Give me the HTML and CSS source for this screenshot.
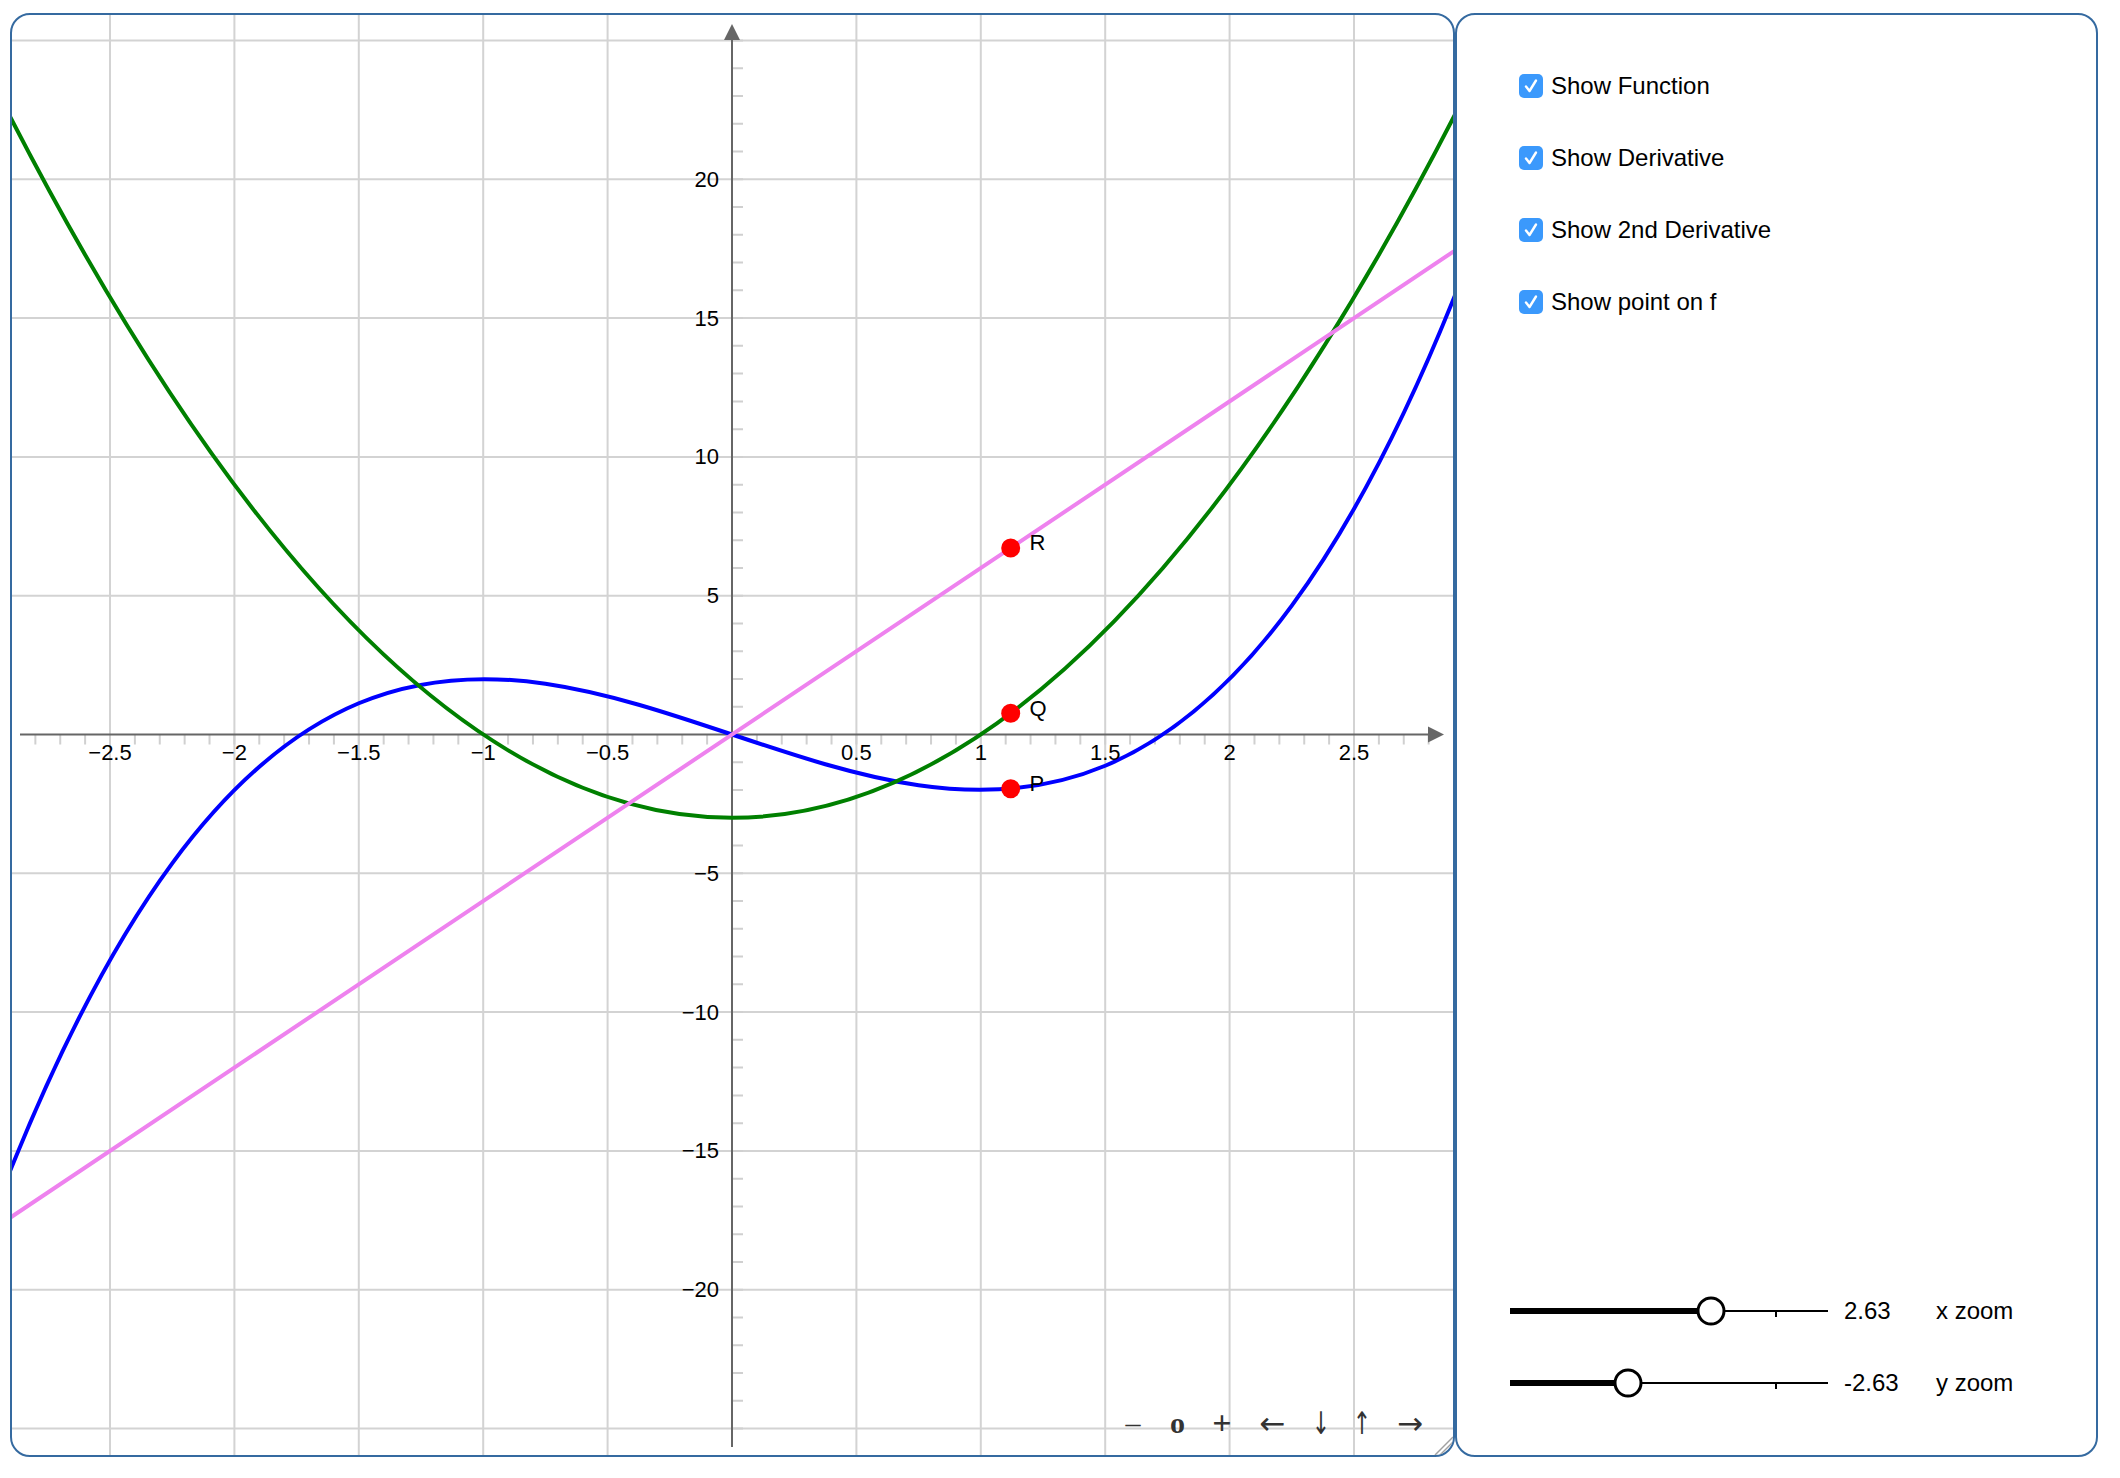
FILE: index.html
```html
<!DOCTYPE html>
<html lang="en">
<head>
<meta charset="utf-8">
<title>Function and derivatives</title>
<link rel="stylesheet" href="styles.css">
</head>
<body>
<div class="page">
  <div class="board">
    <svg class="plot" width="1441" height="1440" viewBox="0 0 1441 1440">
      <g class="grid">
        <line x1="98" y1="0" x2="98" y2="1440"/>
        <line x1="222.4" y1="0" x2="222.4" y2="1440"/>
        <line x1="346.8" y1="0" x2="346.8" y2="1440"/>
        <line x1="471.2" y1="0" x2="471.2" y2="1440"/>
        <line x1="595.6" y1="0" x2="595.6" y2="1440"/>
        <line x1="844.4" y1="0" x2="844.4" y2="1440"/>
        <line x1="968.8" y1="0" x2="968.8" y2="1440"/>
        <line x1="1093.2" y1="0" x2="1093.2" y2="1440"/>
        <line x1="1217.6" y1="0" x2="1217.6" y2="1440"/>
        <line x1="1342" y1="0" x2="1342" y2="1440"/>
        <line x1="0" y1="25.5" x2="1441" y2="25.5"/>
        <line x1="0" y1="164.3" x2="1441" y2="164.3"/>
        <line x1="0" y1="303.1" x2="1441" y2="303.1"/>
        <line x1="0" y1="441.9" x2="1441" y2="441.9"/>
        <line x1="0" y1="580.7" x2="1441" y2="580.7"/>
        <line x1="0" y1="858.3" x2="1441" y2="858.3"/>
        <line x1="0" y1="997.1" x2="1441" y2="997.1"/>
        <line x1="0" y1="1135.9" x2="1441" y2="1135.9"/>
        <line x1="0" y1="1274.7" x2="1441" y2="1274.7"/>
        <line x1="0" y1="1413.5" x2="1441" y2="1413.5"/>
      </g>
      <line class="ticks-x" x1="-27.4" y1="724.5" x2="1420" y2="724.5"/>
      <line class="ticks-y" x1="726" y1="-3.26" x2="726" y2="1432"/>
      <g class="axis">
        <line x1="8" y1="719.5" x2="1418" y2="719.5"/>
        <polygon points="1432,719.5 1416,711.5 1416,727.5"/>
        <line x1="720" y1="1432" x2="720" y2="23"/>
        <polygon points="720,9 712,25 728,25"/>
      </g>
      <path class="curve-f" d="M -26.4 1219.18 C 471.2 -113.3, 968.8 1552.3, 1466.4 219.82"/>
      <path class="curve-d1" d="M -26.4 53.26 C 471.2 1052.62, 968.8 1052.62, 1466.4 53.26"/>
      <path class="curve-d2" d="M -26.4 1219.18 L 1466.4 219.82"/>
      <g class="pt">
        <circle cx="998.7" cy="773.8" r="9.5"/>
        <circle cx="998.7" cy="698.3" r="9.5"/>
        <circle cx="998.7" cy="532.95" r="9.5"/>
      </g>
      <g class="lbl">
        <text x="1017.5" y="535">R</text>
        <text x="1017.5" y="700.5">Q</text>
        <text x="1017.5" y="776">P</text>
      </g>
      <g class="lbl tx">
        <text x="98" y="745">−2.5</text>
        <text x="222.4" y="745">−2</text>
        <text x="346.8" y="745">−1.5</text>
        <text x="471.2" y="745">−1</text>
        <text x="595.6" y="745">−0.5</text>
        <text x="844.4" y="745">0.5</text>
        <text x="968.8" y="745">1</text>
        <text x="1093.2" y="745">1.5</text>
        <text x="1217.6" y="745">2</text>
        <text x="1342" y="745">2.5</text>
      </g>
      <g class="lbl ty">
        <text x="707" y="171.8">20</text>
        <text x="707" y="310.6">15</text>
        <text x="707" y="449.4">10</text>
        <text x="707" y="588.2">5</text>
        <text x="707" y="865.8">−5</text>
        <text x="707" y="1004.6">−10</text>
        <text x="707" y="1143.4">−15</text>
        <text x="707" y="1282.2">−20</text>
      </g>
    </svg>
    <div class="navbar">
      <span class="nav-btn nav-sym">–</span><span class="nav-btn nav-sym nav-bold">o</span><span class="nav-btn nav-sym nav-bold nav-plus">+</span><span class="nav-btn nav-arrow">←</span><span class="nav-btn nav-arrow nav-vert">↓</span><span class="nav-btn nav-arrow nav-vert">↑</span><span class="nav-btn nav-arrow">→</span>
    </div>
    <svg class="grip" width="22" height="22" viewBox="0 0 22 22">
      <line x1="4" y1="22" x2="22" y2="4"/>
      <line x1="9" y1="22" x2="22" y2="9"/>
      <line x1="14" y1="22" x2="22" y2="14"/>
    </svg>
  </div>
  <div class="controls">
    <ul class="checks">
      <li class="check-row"><span class="box"><svg width="24" height="24" viewBox="0 0 24 24"><path d="M7 12.5 L10.5 17 L17 6.5"/></svg></span><span>Show Function</span></li>
      <li class="check-row"><span class="box"><svg width="24" height="24" viewBox="0 0 24 24"><path d="M7 12.5 L10.5 17 L17 6.5"/></svg></span><span>Show Derivative</span></li>
      <li class="check-row"><span class="box"><svg width="24" height="24" viewBox="0 0 24 24"><path d="M7 12.5 L10.5 17 L17 6.5"/></svg></span><span>Show 2nd Derivative</span></li>
      <li class="check-row"><span class="box"><svg width="24" height="24" viewBox="0 0 24 24"><path d="M7 12.5 L10.5 17 L17 6.5"/></svg></span><span>Show point on f</span></li>
    </ul>
    <div class="sliders">
      <div class="slider-row">
        <svg class="slider" width="318" height="40" viewBox="0 0 318 40">
          <line class="track" x1="0" y1="20" x2="318" y2="20"/>
          <line class="fill" x1="0" y1="20" x2="201" y2="20"/>
          <line class="mark" x1="266" y1="20" x2="266" y2="26"/>
          <circle class="knob" cx="201" cy="20" r="13"/>
        </svg>
        <span class="value">2.63</span>
        <span class="name">x zoom</span>
      </div>
      <div class="slider-row">
        <svg class="slider" width="318" height="40" viewBox="0 0 318 40">
          <line class="track" x1="0" y1="20" x2="318" y2="20"/>
          <line class="fill" x1="0" y1="20" x2="118" y2="20"/>
          <line class="mark" x1="266" y1="20" x2="266" y2="26"/>
          <circle class="knob" cx="118" cy="20" r="13"/>
        </svg>
        <span class="value">-2.63</span>
        <span class="name">y zoom</span>
      </div>
    </div>
  </div>
</div>
</body>
</html>
```
FILE: styles.css
```css
html, body {
  margin: 0;
  padding: 0;
  background: #ffffff;
}

.page {
  display: flex;
  align-items: flex-start;
  padding: 13px 0 0 10px;
}

.board {
  position: relative;
  width: 1445px;
  height: 1444px;
  box-sizing: border-box;
  border: 2px solid #356aa0;
  border-radius: 20px;
  overflow: hidden;
  background: #ffffff;
}

.plot {
  display: block;
}

.grid line {
  stroke: #d3d3d3;
  stroke-width: 2;
}

.ticks-x {
  stroke: #d0d0d0;
  stroke-width: 10;
  stroke-dasharray: 2 22.88;
}

.ticks-y {
  stroke: #d0d0d0;
  stroke-width: 10;
  stroke-dasharray: 2 25.76;
}

.axis line {
  stroke: #666666;
  stroke-width: 2;
}

.axis polygon {
  fill: #666666;
}

.curve-f,
.curve-d1,
.curve-d2 {
  fill: none;
  stroke-width: 4;
  stroke-linecap: round;
}

.curve-f { stroke: #0000ff; }
.curve-d1 { stroke: #008000; }
.curve-d2 { stroke: #ee82ee; }

.pt circle {
  fill: #ff0000;
}

.lbl text {
  font-family: "Liberation Sans", Arial, sans-serif;
  font-size: 22px;
  fill: #000000;
}

.tx text { text-anchor: middle; }
.ty text { text-anchor: end; }

.navbar {
  position: absolute;
  right: 30px;
  bottom: 18px;
  height: 28px;
  display: flex;
  align-items: center;
  gap: 30.5px;
  font-family: "Liberation Serif", "DejaVu Serif", serif;
  font-size: 30px;
  color: #333333;
}

.nav-btn {
  display: flex;
  align-items: center;
  justify-content: center;
  height: 28px;
  line-height: 1;
  overflow: visible;
  white-space: nowrap;
}

.nav-sym {
  width: 14px;
}

.nav-bold {
  font-weight: bold;
}

.nav-plus {
  font-size: 34px;
}

.nav-arrow {
  font-family: "DejaVu Sans", sans-serif;
  font-size: 31px;
  width: 26px;
}

.nav-vert {
  width: 10px;
  transform: scaleX(0.7);
}

.grip {
  position: absolute;
  right: 0;
  bottom: 0;
}

.grip line {
  stroke: #a0a0a0;
  stroke-width: 1.5;
}

.controls {
  width: 643px;
  height: 1444px;
  box-sizing: border-box;
  border: 2px solid #356aa0;
  border-radius: 20px;
  display: flex;
  flex-direction: column;
  padding: 59px 0 52px 0;
  font-family: "Liberation Sans", Arial, sans-serif;
  font-size: 24px;
  color: #000000;
}

.checks {
  list-style: none;
  margin: 0;
  padding: 0 0 0 62px;
  display: flex;
  flex-direction: column;
  gap: 48px;
}

.check-row {
  display: flex;
  align-items: center;
  gap: 8px;
  height: 24px;
}

.box {
  width: 24px;
  height: 24px;
  border-radius: 5px;
  background: #3b99fc;
  display: flex;
}

.box svg path {
  fill: none;
  stroke: #ffffff;
  stroke-width: 2.4;
  stroke-linecap: round;
  stroke-linejoin: round;
}

.sliders {
  margin-top: auto;
  display: flex;
  flex-direction: column;
  gap: 32px;
  padding-left: 53px;
}

.slider-row {
  display: flex;
  align-items: center;
  height: 40px;
}

.slider {
  display: block;
  margin-right: 16px;
  overflow: visible;
}

.slider .track {
  stroke: #000000;
  stroke-width: 2;
}

.slider .fill {
  stroke: #000000;
  stroke-width: 6;
}

.slider .mark {
  stroke: #000000;
  stroke-width: 2;
}

.slider .knob {
  fill: #ffffff;
  stroke: #000000;
  stroke-width: 3;
}

.value {
  width: 92px;
}
```
